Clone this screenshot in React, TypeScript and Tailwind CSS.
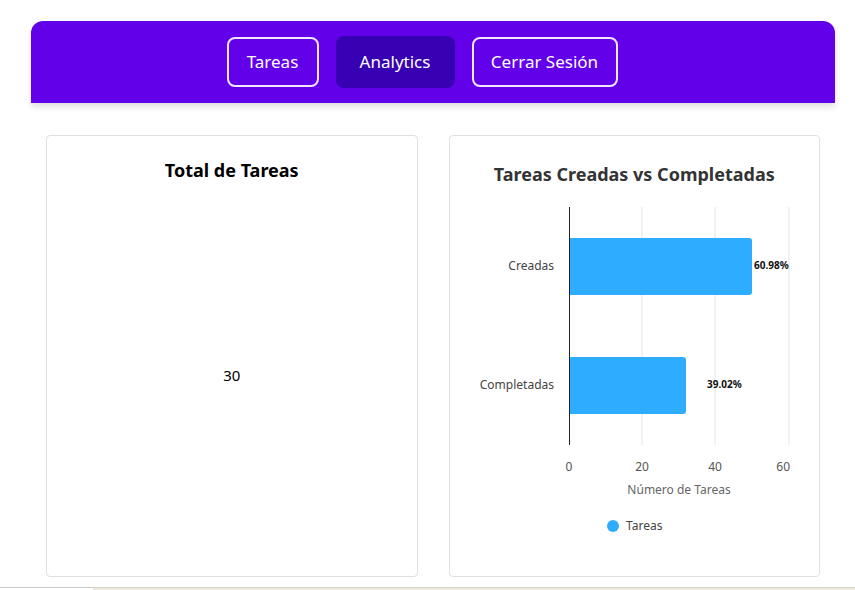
const navButtons = [
  { label: 'Tareas', width: 'w-[92px]', active: false },
  { label: 'Analytics', width: 'w-[119px]', active: true },
  { label: 'Cerrar Sesión', width: 'w-[146px]', active: false },
]

const gridLines = [193, 266, 340]
const ticks = [
  { label: '0', x: 120, anchor: 'middle' },
  { label: '20', x: 193, anchor: 'middle' },
  { label: '40', x: 266, anchor: 'middle' },
  { label: '60', x: 341, anchor: 'end' },
]

function BarChart() {
  return (
    <svg width="370" height="330" viewBox="0 0 370 330" className="block">
      {gridLines.map((x) => (
        <line key={x} x1={x} y1={2} x2={x} y2={240} stroke="#e5e5e5" strokeWidth="1" />
      ))}
      {/* Bars */}
      <path d="M120 33 H300 Q303 33 303 36 V87 Q303 90 300 90 H120 Z" fill="#2eacff" />
      <path d="M120 152 H234 Q237 152 237 155 V206 Q237 209 234 209 H120 Z" fill="#2eacff" />
      <line x1={120.5} y1={2} x2={120.5} y2={240} stroke="#222" strokeWidth="1" />

      <text x={105} y={65} textAnchor="end" fontSize="12" fill="#444">Creadas</text>
      <text x={105} y={184} textAnchor="end" fontSize="12" fill="#444">Completadas</text>

      <text x={305} y={64} fontSize="10" fontWeight="700" fill="#111">60.98%</text>
      <text x={258} y={183} fontSize="10" fontWeight="700" fill="#111">39.02%</text>

      {ticks.map((t) => (
        <text key={t.label} x={t.x} y={266} textAnchor={t.anchor} fontSize="12" fill="#555">
          {t.label}
        </text>
      ))}
      <text x={230} y={289} textAnchor="middle" fontSize="12" fill="#666">Número de Tareas</text>

      {/* Legend */}
      <circle cx={164} cy={321} r={6} fill="#2eacff" />
      <text x={177} y={325} fontSize="12" fill="#444">Tareas</text>
    </svg>
  )
}

export default function App() {
  return (
    <div className="min-h-[590px] bg-white font-['Noto_Sans','Open_Sans',sans-serif]">
      {/* Header */}
      <header className="ml-[31px] mt-[21px] flex h-[82px] w-[804px] items-center justify-center gap-[17px] rounded-t-[12px] bg-[#6200ea] pr-[22px] shadow-[0_4px_6px_rgba(0,0,0,0.12)]">
        {navButtons.map((btn) => (
          <button
            key={btn.label}
            className={
              btn.active
                ? `${btn.width} h-[52px] rounded-[8px] bg-[#3700b3] text-[17px] text-white`
                : `${btn.width} h-[50px] rounded-[8px] border-2 border-[#f3e5ff] text-[17px] text-white`
            }
          >
            {btn.label}
          </button>
        ))}
      </header>

      {/* Cards */}
      <main className="ml-[46px] mt-[32px] grid w-[774px] grid-cols-2 gap-[31px]">
        <div className="flex h-[442px] flex-col items-center rounded-[4px] border border-[#e0e0e0] bg-white">
          <h2 className="mt-[21px] text-[18px] font-bold text-black">Total de Tareas</h2>
          <div className="mt-[180px] text-[15px] text-black">30</div>
        </div>

        <div className="flex h-[442px] flex-col items-center rounded-[4px] border border-[#e0e0e0] bg-white">
          <h2 className="mt-[25px] h-[44px] text-[18px] font-bold text-[#333]">
            Tareas Creadas vs Completadas
          </h2>
          <BarChart />
        </div>
      </main>

      {/* Bottom edge */}
      <div className="mt-[10px] flex h-[3px]">
        <div className="h-px w-[93px] bg-[#c8c8c8]" />
        <div className="h-[3px] flex-1 border-t border-[#d5d0c8] bg-[#efe9e0]" />
      </div>
    </div>
  )
}
